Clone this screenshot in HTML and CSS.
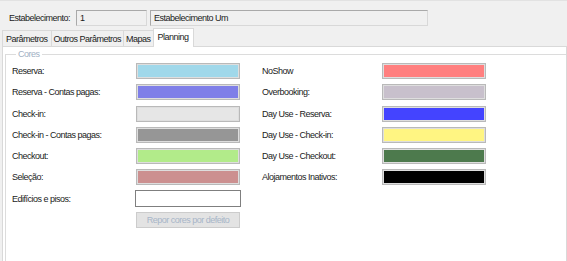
FILE: index.html
```html
<!DOCTYPE html>
<html lang="pt">
<head>
    <meta charset="UTF-8">
    <title>Planning</title>
    <link rel="stylesheet" href="styles.css">
</head>
<body>

<div class="header">
    <span class="caption">Estabelecimento:</span>
    <div class="field code">1</div>
    <div class="field name">Estabelecimento Um</div>
</div>

<div class="tabs">
    <div class="tab">Parâmetros</div>
    <div class="tab">Outros Parâmetros</div>
    <div class="tab">Mapas</div>
    <div class="tab active">Planning</div>
</div>

<div class="page">
    <fieldset class="group">
        <legend>Cores</legend>
        <div class="colors">
            <span class="lbl">Reserva:</span>
            <div class="swatch" style="background-color: #a0d8ea;"></div>
            <span class="lbl">NoShow</span>
            <div class="swatch" style="background-color: #ff7f7f;"></div>

            <span class="lbl">Reserva - Contas pagas:</span>
            <div class="swatch" style="background-color: #7f7fe8;"></div>
            <span class="lbl">Overbooking:</span>
            <div class="swatch" style="background-color: #c8c0cc;"></div>

            <span class="lbl">Check-in:</span>
            <div class="swatch" style="background-color: #e6e6e6;"></div>
            <span class="lbl">Day Use - Reserva:</span>
            <div class="swatch" style="background-color: #4444ff;"></div>

            <span class="lbl">Check-in - Contas pagas:</span>
            <div class="swatch" style="background-color: #969696;"></div>
            <span class="lbl">Day Use - Check-in:</span>
            <div class="swatch" style="background-color: #fff582;"></div>

            <span class="lbl">Checkout:</span>
            <div class="swatch" style="background-color: #b2eb8a;"></div>
            <span class="lbl">Day Use - Checkout:</span>
            <div class="swatch" style="background-color: #4d7a4d;"></div>

            <span class="lbl">Seleção:</span>
            <div class="swatch" style="background-color: #cc9090;"></div>
            <span class="lbl">Alojamentos Inativos:</span>
            <div class="swatch" style="background-color: #000000;"></div>

            <span class="lbl">Edifícios e pisos:</span>
            <div class="textbox"></div>
            <span></span>
            <span></span>

            <span></span>
            <button class="reset" disabled>Repor cores por defeito</button>
        </div>
    </fieldset>
</div>

</body>
</html>
```

FILE: styles.css
```css
html, body {
    margin: 0;
    height: 100%;
    overflow: hidden;
}
body {
    display: flex;
    flex-direction: column;
    font-family: "Liberation Sans", Arial, sans-serif;
    font-size: 9px;
    letter-spacing: -0.5px;
    color: #1b1b1b;
    background-color: #f0f0f0;
    border-top: 1px solid #e2e2e2;
    box-sizing: border-box;
}
.header {
    display: flex;
    align-items: center;
    padding: 9px 0 0 9px;
    height: 16px;
}
.caption {
    width: 67px;
}
.field {
    box-sizing: border-box;
    height: 16px;
    line-height: 14px;
    padding-left: 3px;
    border: 1px solid #a9a9a9;
    border-right-color: #d8d8d8;
    border-bottom-color: #d8d8d8;
    background-color: #f0f0f0;
    margin-right: 3px;
}
.field.code {
    width: 71px;
}
.field.name {
    width: 278px;
}
.tabs {
    display: flex;
    align-items: flex-end;
    margin: 2px 0 0 2px;
    height: 18px;
    position: relative;
    z-index: 1;
}
.tab {
    box-sizing: border-box;
    height: 16px;
    line-height: 16px;
    padding: 0 3px;
    border: 1px solid #d9d9d9;
    border-bottom: none;
    border-left: none;
}
.tab:first-child {
    border-left: 1px solid #d9d9d9;
}
.tab:nth-child(2),
.tab:nth-child(3) {
    padding: 0 2px;
}
.tab.active {
    height: 19px;
    margin-bottom: -1px;
    padding: 0 4px;
    background-color: #ffffff;
    border-left: 1px solid #d9d9d9;
    margin-left: -1px;
}
.page {
    flex: 1;
    min-height: 0;
    overflow: hidden;
    margin-left: 2px;
    background-color: #ffffff;
    border: 1px solid #d9d9d9;
    border-bottom: none;
}
.group {
    box-sizing: border-box;
    margin: 1px 0 0 2px;
    padding: 3px 0 0 6px;
    min-height: calc(100% + 10px);
    border: 1px solid #dcdcdc;
    border-right: none;
}
.group legend {
    margin-left: 4px;
    padding: 0 2px;
    line-height: 12px;
    color: #9fb0c3;
}
.colors {
    display: grid;
    grid-template-columns: 124px 126px 120px 104px;
    grid-auto-rows: 16px;
    row-gap: 5.3px;
    align-items: center;
}
.swatch {
    box-sizing: border-box;
    width: 104px;
    height: 16px;
    border: 1px solid #b9b9b9;
    box-shadow: inset 0 0 0 1px #dedede;
}
.textbox {
    box-sizing: border-box;
    width: 106px;
    height: 17px;
    margin-left: -1px;
    border: 1px solid #7f7f7f;
    background-color: #ffffff;
}
.reset {
    box-sizing: border-box;
    width: 104px;
    height: 16px;
    padding: 0;
    font-family: inherit;
    font-size: 9px;
    letter-spacing: -0.5px;
    color: #a7b5c8;
    background-color: #e3e3e3;
    border: 1px solid #cccccc;
}
```
